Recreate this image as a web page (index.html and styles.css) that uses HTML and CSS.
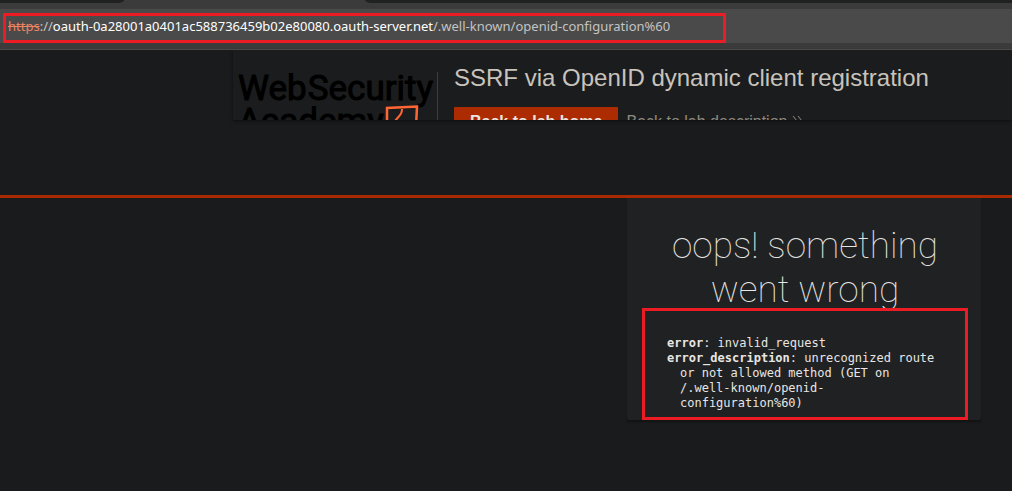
FILE: index.html
```html
<!DOCTYPE html>
<html lang="en">
<head>
<meta charset="utf-8">
<meta name="viewport" content="width=device-width, initial-scale=1">
<title>SSRF via OpenID dynamic client registration</title>
<link rel="stylesheet" href="styles.css">
</head>
<body>
<div class="browser">
  <div class="tabs">
    <div class="tab tab-before"></div>
    <div class="tab-active"></div>
    <div class="tab tab-after"></div>
  </div>
  <div class="toolbar">
    <div class="address" role="textbox" contenteditable="true" spellcheck="false" aria-label="Address"><s class="scheme">https</s><span class="sep">://</span><span class="host">oauth-0a28001a0401ac588736459b02e80080.oauth-server.net</span><span class="path">/.well-known/openid-configuration%60</span></div>
    <div class="mark mark-address"></div>
  </div>
</div>

<header class="lab">
  <div class="logo">
    <div class="logo-row"><span>Web</span><span>Security</span></div>
    <div class="logo-row"><span>Academy</span>
      <svg class="bolt" width="34" height="34" viewBox="0 0 34 34" fill="none" stroke="#ff6633" aria-hidden="true">
        <path d="M2 32V3L32 1.500L30.500 32Z" stroke-width="2.500"/>
        <path d="M17 4C17 9 15 10 9 17H18L14 29" stroke-width="2"/>
      </svg>
    </div>
  </div>
  <div class="lab-info">
    <h2 class="lab-title">SSRF via OpenID dynamic client registration</h2>
    <div class="lab-actions">
      <a class="button" href="#home">Back to lab home</a>
      <a class="back" href="#description">Back to lab description
        <svg width="11" height="12" viewBox="0 0 11 12" fill="none" stroke="currentColor" aria-hidden="true">
          <path d="M1 1L5 6L1 11M6 1L10 6L6 11"/>
        </svg>
      </a>
    </div>
  </div>
</header>

<main class="page">
  <section class="card">
    <h1 class="card-title">oops! something went wrong</h1>
    <div class="error">
      <pre class="line"><strong>error</strong>: invalid_request</pre>
      <pre class="line"><strong>error_description</strong>: unrecognized route or not allowed method (GET on /.well-known/openid-configuration%60)</pre>
      <div class="mark mark-error"></div>
    </div>
  </section>
</main>
</body>
</html>
```
FILE: styles.css
```css
* { box-sizing: border-box; }

body {
  margin: 0;
  min-height: 100vh;
  background: #1a1b1c;
  color: #e8e6e3;
  font-family: "Liberation Sans", Arial, sans-serif;
}

.browser { background: #3b3b3b; }

.tabs { display: flex; height: 3px; }
.tab { background: #202221; }
.tab-before { width: 124px; border-bottom-right-radius: 6px 3px; }
.tab-active { width: 241px; }
.tab-after { flex: 1; border-bottom-left-radius: 6px 3px; }

.toolbar {
  position: relative;
  padding: 6px 0;
  border-bottom: 1px solid #4a4a4a;
}
.address {
  height: 34px;
  padding: 0 8px;
  background: #4a4a4a;
  color: #c3c3c3;
  font: 13px/34px "Noto Sans", "Open Sans", sans-serif;
  white-space: nowrap;
  overflow: hidden;
  outline: none;
}
.scheme { color: #ee8360; }
.host { color: #fff; }

.mark {
  position: absolute;
  border: 3px solid #ed1c24;
  pointer-events: none;
}
.mark-address { left: 3px; top: 10px; bottom: 6px; width: 723px; }
.mark-error { inset: 0; }

.lab {
  display: flex;
  height: 70px;
  margin-left: 233px;
  padding-left: 5px;
  overflow: hidden;
  background: #1b1c1d;
  box-shadow: 0 1px 3px #0d0e0f;
}
.logo {
  width: 200px;
  height: 100px;
  margin: 22px 16px 0 0;
  border-right: 1px solid #3a3e41;
  color: #000;
  font: 400 35px/33px Roboto, sans-serif;
  -webkit-text-stroke: 1px #000;
}
.logo-row { display: flex; gap: 1px; white-space: nowrap; }
.bolt { flex: none; }

.lab-title {
  margin: 14px 0 0;
  color: #c8c3bc;
  font-size: 24px;
  font-weight: 400;
  line-height: 28px;
}
.lab-actions {
  display: flex;
  gap: 8px;
  margin-top: 15px;
  font-size: 16px;
  line-height: 30px;
}
.button {
  padding: 0 16px;
  background: #ad2b00;
  color: #e8e6e3;
  font-weight: 700;
  text-decoration: none;
}
.back { color: #8f8a80; text-decoration: none; }

.page {
  margin-top: 75px;
  border-top: 3px solid #a82a00;
}
.card {
  width: 354px;
  margin: 0 31px 0 auto;
  padding: 26px 13px 0 15px;
  border-radius: 0 0 2px 2px;
  background: #1f2122;
  box-shadow: 0 2px 2px #121314;
}
.card-title {
  margin: 0 20px;
  font: 100 37px/44px Roboto, sans-serif;
  text-align: center;
}
.error {
  position: relative;
  margin-top: -4px;
  padding: 28px 25px 9px;
}
.line {
  margin: 0;
  padding-left: 13px;
  text-indent: -13px;
  font: 12px/15px "DejaVu Sans Mono", monospace;
  white-space: pre-wrap;
}
```
